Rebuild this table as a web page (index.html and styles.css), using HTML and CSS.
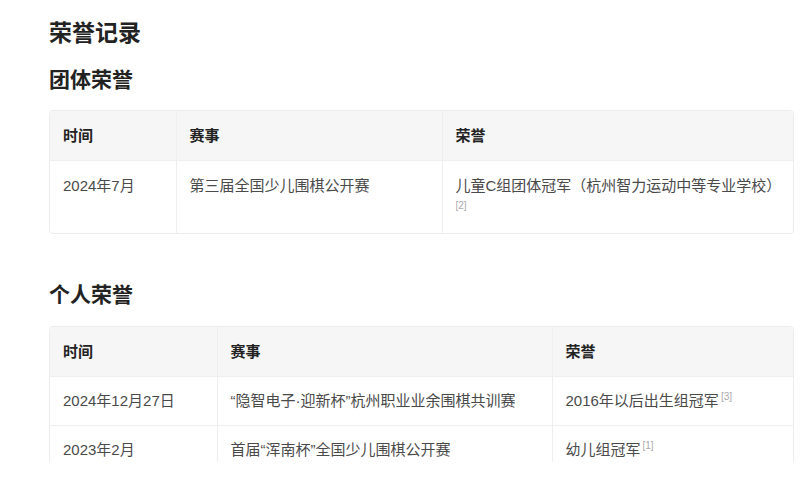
FILE: index.html
```html
<!DOCTYPE html>
<html lang="zh-CN">
<head>
    <meta charset="UTF-8">
    <meta name="viewport" content="width=device-width, initial-scale=1.0">
    <title>荣誉记录</title>
    <link rel="stylesheet" href="styles.css">
</head>
<body>

    <div class="page">
        <h1 class="title">荣誉记录</h1>

        <h2 class="subtitle">团体荣誉</h2>
        <div class="table-box">
            <table class="honors team">
                <colgroup>
                    <col class="c1">
                    <col class="c2">
                    <col class="c3">
                </colgroup>
                <tr>
                    <th>时间</th>
                    <th>赛事</th>
                    <th>荣誉</th>
                </tr>
                <tr>
                    <td class="tall">2024年7月</td>
                    <td class="tall">第三届全国少儿围棋公开赛</td>
                    <td class="tall">儿童C组团体冠军（杭州智力运动中等专业学校）<sup>[2]</sup></td>
                </tr>
            </table>
        </div>

        <h2 class="subtitle second">个人荣誉</h2>
        <div class="table-box">
            <table class="honors personal">
                <colgroup>
                    <col class="c1">
                    <col class="c2">
                    <col class="c3">
                </colgroup>
                <tr>
                    <th>时间</th>
                    <th>赛事</th>
                    <th>荣誉</th>
                </tr>
                <tr>
                    <td>2024年12月27日</td>
                    <td>“隐智电子·迎新杯”杭州职业业余围棋共训赛</td>
                    <td>2016年以后出生组冠军<sup>[3]</sup></td>
                </tr>
                <tr>
                    <td>2023年2月</td>
                    <td>首届“浑南杯”全国少儿围棋公开赛</td>
                    <td>幼儿组冠军<sup>[1]</sup></td>
                </tr>
            </table>
        </div>
    </div>

</body>
</html>
```

FILE: styles.css
```css
/* Page */
body {
    margin: 0;
    background: #fff;
    color: #333;
    font-family: "Liberation Sans", "Noto Sans CJK SC", sans-serif;
}

.page {
    height: 462px;
    overflow: hidden;
    padding: 17px 14px 0 49px;
    box-sizing: border-box;
}

/* Headings */
.title {
    margin: 0;
    font-size: 23px;
    line-height: 32px;
    font-weight: bold;
    color: #222;
}

.subtitle {
    margin: 16px 0 15px;
    font-size: 21px;
    line-height: 30px;
    font-weight: bold;
    color: #222;
}

.subtitle.second {
    margin-top: 46px;
    margin-bottom: 16px;
}

/* Tables */
.table-box {
    width: 745px;
    border: 1px solid #ececec;
    border-radius: 4px;
    overflow: hidden;
    box-sizing: border-box;
}

.honors {
    width: 100%;
    border-collapse: collapse;
    table-layout: fixed;
    font-size: 15px;
}

.honors th,
.honors td {
    padding: 12px 13px 12px;
    line-height: 24px;
    text-align: left;
    vertical-align: top;
    border-left: 1px solid #efefef;
    border-top: 1px solid #efefef;
}

.honors td.tall {
    padding-top: 13px;
    padding-bottom: 11px;
}

.honors tr:first-child th {
    padding-top: 13px;
    border-top: none;
}

.honors th:first-child,
.honors td:first-child {
    border-left: none;
}

.honors th {
    background: #f6f6f6;
    color: #222;
    font-weight: bold;
}

.honors td {
    color: #4a4a4a;
}

.honors sup {
    font-size: 10px;
    color: #aaa;
    vertical-align: top;
    line-height: 16px;
    margin-left: 2px;
}

.honors td.tall sup {
    margin-left: 0;
}

/* Column widths */
.team .c1 { width: 126px; }
.team .c2 { width: 266px; }
.team .c3 { width: 351px; }

.personal .c1 { width: 167px; }
.personal .c2 { width: 335px; }
.personal .c3 { width: 241px; }
```
